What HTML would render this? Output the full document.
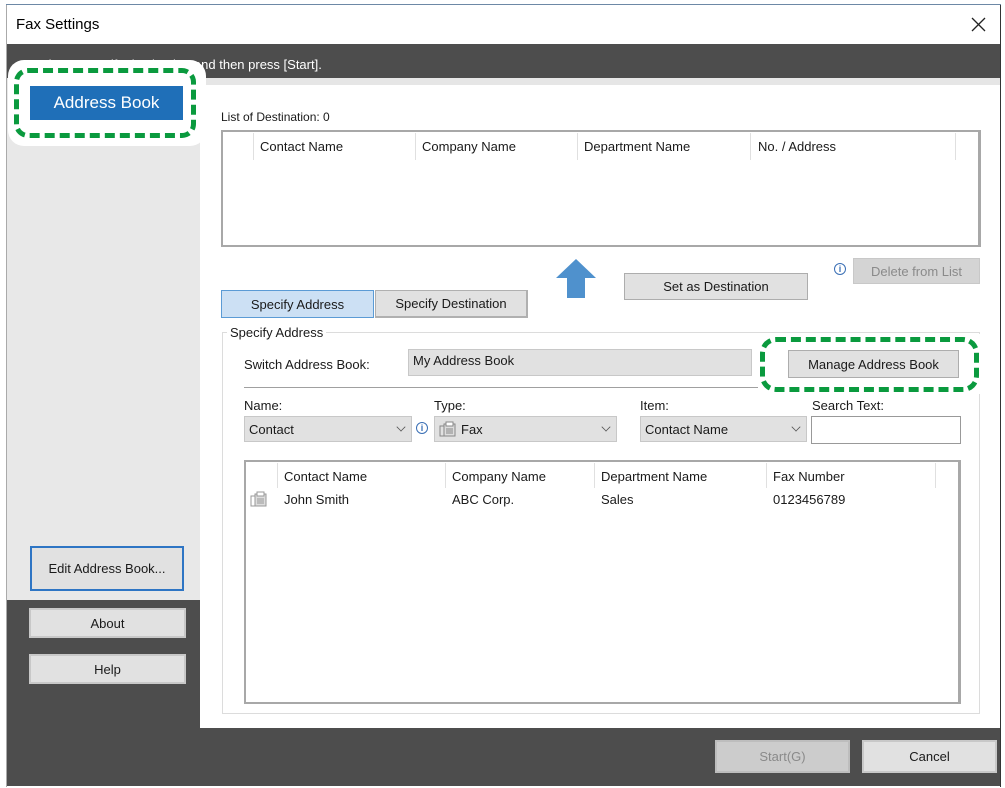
<!DOCTYPE html>
<html><head><meta charset="utf-8"><style>
*{box-sizing:border-box;margin:0;padding:0}
body{width:1005px;height:788px;background:#fff;position:relative;overflow:hidden;font-family:"Liberation Sans","DejaVu Sans",sans-serif;font-size:13px;color:#1a1a1a}
.a{position:absolute}
.btn{position:absolute;background:#e1e1e1;border:1px solid #adadad;text-align:center;font-size:13px;display:flex;align-items:center;justify-content:center}
.t{position:absolute;white-space:nowrap}
.combo{position:absolute;background:#e1e1e1;border:1px solid #c8c8c8;padding-left:4px;display:flex;align-items:center}
.chev{position:absolute;right:6px;top:6px;width:8px;height:8px;border-right:1px solid #555;border-bottom:1px solid #555;transform:rotate(45deg) scale(.8)}
.vl{position:absolute;width:1px;background:#e0e0e0}
.info{position:absolute;width:12px;height:12px;border:1px solid #3a6fb5;border-radius:50%;color:#3a6fb5;font-size:9px;line-height:10px;text-align:center;font-weight:bold}
</style></head><body>
<div class="a" style="left:6px;top:4px;width:995px;height:1px;background:#6d88a6"></div>
<div class="a" style="left:6px;top:5px;width:995px;height:782px;border-left:1px solid #aaa;border-right:1px solid #333"></div>
<div class="t" style="left:16px;top:16px;font-size:15px;color:#000">Fax Settings</div>
<svg class="a" style="left:971px;top:17px" width="15" height="15"><path d="M1 1L14 14M14 1L1 14" stroke="#222" stroke-width="1.3"/></svg>
<div class="a" style="left:7px;top:44px;width:993px;height:34px;background:#4d4d4d"></div>
<div class="t" style="left:40px;top:57px;color:#fff;font-size:13px">Please specify destination and then press [Start].</div>
<div class="a" style="left:200px;top:78px;width:800px;height:7px;background:#e6e6e6"></div>
<div class="a" style="left:7px;top:78px;width:193px;height:522px;background:#e8e8e8"></div>
<div class="a" style="left:7px;top:600px;width:993px;height:186px;background:#4d4d4d"></div>
<div class="a" style="left:200px;top:85px;width:800px;height:643px;background:#fff"></div>

<div class="a" style="left:8px;top:60px;width:198px;height:86px;background:#fff;border-radius:16px"></div>
<div class="a" style="left:14px;top:68px;width:182px;height:70px;border:5px dashed #0a9a3e;border-radius:14px"></div>
<div class="a" style="left:30px;top:86px;width:153px;height:34px;background:#1f6fb8;color:#fff;font-size:17px;display:flex;align-items:center;justify-content:center">Address Book</div>

<div class="t" style="left:221px;top:110px;font-size:12px">List of Destination: 0</div>
<div class="a" style="left:221px;top:130px;width:760px;height:117px;border:2px solid #a8a8a8;border-right-width:3px"></div>
<div class="vl" style="left:253px;top:133px;height:27px"></div>
<div class="vl" style="left:415px;top:133px;height:27px"></div>
<div class="vl" style="left:577px;top:133px;height:27px"></div>
<div class="vl" style="left:750px;top:133px;height:27px"></div>
<div class="vl" style="left:955px;top:133px;height:27px"></div>
<div class="t" style="left:260px;top:139px">Contact Name</div>
<div class="t" style="left:422px;top:139px">Company Name</div>
<div class="t" style="left:584px;top:139px">Department Name</div>
<div class="t" style="left:758px;top:139px">No. / Address</div>

<svg class="a" style="left:556px;top:258px" width="42" height="41"><path d="M20 1 L40 20 L29 20 L29 40 L11 40 L11 20 L0 20 Z" fill="#4f91cd"/></svg>
<div class="btn" style="left:624px;top:273px;width:184px;height:27px">Set as Destination</div>
<div class="info" style="left:834px;top:263px">i</div>
<div class="btn" style="left:853px;top:258px;width:127px;height:26px;background:#d4d4d4;border-color:#c8c8c8;color:#8a8a8a">Delete from List</div>

<div class="btn" style="left:221px;top:290px;width:153px;height:28px;background:#cce0f4;border-color:#5b9bd5">Specify Address</div>
<div class="btn" style="left:375px;top:290px;width:153px;height:28px;border-color:#b0b0b0;border-width:1px 2px 2px 1px">Specify Destination</div>

<div class="a" style="left:222px;top:332px;width:758px;height:382px;border:1px solid #dcdcdc"></div>
<div class="t" style="left:227px;top:325px;background:#fff;padding:0 3px">Specify Address</div>
<div class="t" style="left:244px;top:357px">Switch Address Book:</div>
<div class="combo" style="left:408px;top:349px;width:344px;height:27px;padding-bottom:4px">My Address Book</div>
<div class="a" style="left:244px;top:387px;width:536px;height:1px;background:#a0a0a0"></div>

<div class="a" style="left:758px;top:334px;width:224px;height:60px;background:#fff"></div>
<div class="a" style="left:760px;top:337px;width:219px;height:55px;border:5px dashed #0a9a3e;border-radius:16px"></div>
<div class="btn" style="left:788px;top:350px;width:171px;height:28px">Manage Address Book</div>

<div class="t" style="left:244px;top:398px">Name:</div>
<div class="combo" style="left:244px;top:416px;width:168px;height:26px">Contact<span class="chev"></span></div>
<div class="info" style="left:416px;top:422px">i</div>
<div class="t" style="left:434px;top:398px">Type:</div>
<div class="combo" style="left:434px;top:416px;width:183px;height:26px"><svg width="18" height="16" style="margin-right:4px"><rect x="1" y="5" width="4" height="10" fill="none" stroke="#888"/><rect x="5" y="3" width="11" height="12" fill="#ddd" stroke="#888"/><rect x="7" y="1" width="7" height="4" fill="#fff" stroke="#888"/><path d="M7 8h7M7 10h7M7 12h7" stroke="#888"/></svg>Fax<span class="chev"></span></div>
<div class="t" style="left:640px;top:398px">Item:</div>
<div class="combo" style="left:640px;top:416px;width:167px;height:26px">Contact Name<span class="chev"></span></div>
<div class="t" style="left:812px;top:398px">Search Text:</div>
<div class="a" style="left:811px;top:416px;width:150px;height:28px;border:1px solid #999;background:#fff"></div>

<div class="a" style="left:244px;top:460px;width:717px;height:244px;border:2px solid #a8a8a8;border-right-width:3px"></div>
<div class="vl" style="left:277px;top:463px;height:25px"></div>
<div class="vl" style="left:445px;top:463px;height:25px"></div>
<div class="vl" style="left:594px;top:463px;height:25px"></div>
<div class="vl" style="left:766px;top:463px;height:25px"></div>
<div class="vl" style="left:935px;top:463px;height:25px"></div>
<div class="t" style="left:284px;top:469px">Contact Name</div>
<div class="t" style="left:452px;top:469px">Company Name</div>
<div class="t" style="left:601px;top:469px">Department Name</div>
<div class="t" style="left:773px;top:469px">Fax Number</div>
<svg class="a" style="left:250px;top:491px" width="18" height="16"><rect x="1" y="5" width="4" height="10" fill="none" stroke="#999"/><rect x="5" y="3" width="11" height="12" fill="#ddd" stroke="#999"/><rect x="7" y="1" width="7" height="4" fill="#fff" stroke="#999"/><path d="M7 8h7M7 10h7M7 12h7" stroke="#999"/></svg>
<div class="t" style="left:284px;top:492px">John Smith</div>
<div class="t" style="left:452px;top:492px">ABC Corp.</div>
<div class="t" style="left:601px;top:492px">Sales</div>
<div class="t" style="left:773px;top:492px">0123456789</div>

<div class="btn" style="left:30px;top:546px;width:154px;height:45px;border:2px solid #2e75c4">Edit Address Book...</div>
<div class="btn" style="left:29px;top:608px;width:157px;height:30px;border:2px solid #c8c8c8">About</div>
<div class="btn" style="left:29px;top:654px;width:157px;height:30px;border:2px solid #c8c8c8">Help</div>

<div class="btn" style="left:715px;top:740px;width:135px;height:33px;background:#cccccc;border:2px solid #bdbdbd;color:#8a8a8a">Start(G)</div>
<div class="btn" style="left:862px;top:740px;width:135px;height:33px;border:2px solid #c8c8c8">Cancel</div>
</body></html>
